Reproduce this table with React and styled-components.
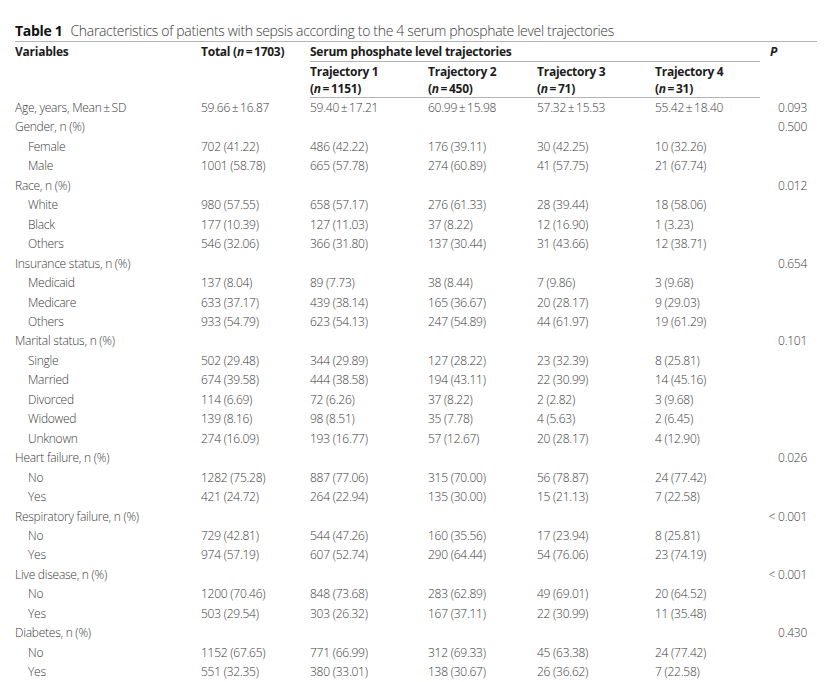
import styled, { createGlobalStyle } from "styled-components";

const GlobalStyle = createGlobalStyle`
  html, body {
    margin: 0;
    padding: 0;
    background: #ffffff;
  }
  body {
    font-family: "Open Sans", "Liberation Sans", sans-serif;
    color: #3a3a3a;
  }
`;

const Page = styled.div`
  padding: 22px 14px 0 15px;
  width: 802px;
`;

const Caption = styled.div`
  font-size: 14px;
  line-height: 18px;
  height: 19px;
  color: #3a3a3a;
  font-weight: 300;
  letter-spacing: -0.33px;
  white-space: nowrap;

  b {
    font-weight: 700;
    color: #111;
    letter-spacing: -0.3px;
    margin-right: 8px;
  }
`;

const Table = styled.table`
  width: 802px;
  border-collapse: collapse;
  table-layout: fixed;
  font-size: 12px;
  font-weight: 300;
  letter-spacing: -0.25px;
  border-top: 1px solid #b4b4b4;
`;

const Head = styled.thead`
  th {
    font-weight: 700;
    color: #1c1c1c;
    text-align: left;
    vertical-align: top;
    padding: 0;
    white-space: nowrap;
    letter-spacing: -0.25px;
  }
  tr:last-child th {
    border-bottom: 1px solid #b4b4b4;
  }
`;

const TopCell = styled.th`
  height: 19px;
  line-height: 19px;
  padding-left: ${(p) => p.$pad || 0}px !important;
`;

const GroupCell = styled.th`
  height: 19px;
  line-height: 19px;
  border-bottom: 1px solid #b4b4b4;
`;

const TrajCell = styled.th`
  height: 34px;
  line-height: 17px;
  padding-top: 1px !important;
`;

const PHead = styled.i`
  font-style: italic;
`;

const Row = styled.tr`
  td {
    height: 19.45px;
    line-height: 19.45px;
    padding: 0;
    white-space: nowrap;
    vertical-align: middle;
  }
`;

const Label = styled.td`
  padding-left: ${(p) => (p.$indent ? 13 : 0)}px !important;
`;

const PValue = styled.td`
  text-align: right;
  padding-right: 10px !important;
`;

const N = styled.i`
  font-style: italic;
`;

const pm = (a, b) => `${a}\u2009\u00b1\u2009${b}`;
const lt = "<\u00a00.001";

const rows = [
  ["Age, years, Mean\u2009\u00b1\u2009SD", false, [pm("59.66", "16.87"), pm("59.40", "17.21"), pm("60.99", "15.98"), pm("57.32", "15.53"), pm("55.42", "18.40")], "0.093"],
  ["Gender, n (%)", false, null, "0.500"],
  ["Female", true, ["702 (41.22)", "486 (42.22)", "176 (39.11)", "30 (42.25)", "10 (32.26)"]],
  ["Male", true, ["1001 (58.78)", "665 (57.78)", "274 (60.89)", "41 (57.75)", "21 (67.74)"]],
  ["Race, n (%)", false, null, "0.012"],
  ["White", true, ["980 (57.55)", "658 (57.17)", "276 (61.33)", "28 (39.44)", "18 (58.06)"]],
  ["Black", true, ["177 (10.39)", "127 (11.03)", "37 (8.22)", "12 (16.90)", "1 (3.23)"]],
  ["Others", true, ["546 (32.06)", "366 (31.80)", "137 (30.44)", "31 (43.66)", "12 (38.71)"]],
  ["Insurance status, n (%)", false, null, "0.654"],
  ["Medicaid", true, ["137 (8.04)", "89 (7.73)", "38 (8.44)", "7 (9.86)", "3 (9.68)"]],
  ["Medicare", true, ["633 (37.17)", "439 (38.14)", "165 (36.67)", "20 (28.17)", "9 (29.03)"]],
  ["Others", true, ["933 (54.79)", "623 (54.13)", "247 (54.89)", "44 (61.97)", "19 (61.29)"]],
  ["Marital status, n (%)", false, null, "0.101"],
  ["Single", true, ["502 (29.48)", "344 (29.89)", "127 (28.22)", "23 (32.39)", "8 (25.81)"]],
  ["Married", true, ["674 (39.58)", "444 (38.58)", "194 (43.11)", "22 (30.99)", "14 (45.16)"]],
  ["Divorced", true, ["114 (6.69)", "72 (6.26)", "37 (8.22)", "2 (2.82)", "3 (9.68)"]],
  ["Widowed", true, ["139 (8.16)", "98 (8.51)", "35 (7.78)", "4 (5.63)", "2 (6.45)"]],
  ["Unknown", true, ["274 (16.09)", "193 (16.77)", "57 (12.67)", "20 (28.17)", "4 (12.90)"]],
  ["Heart failure, n (%)", false, null, "0.026"],
  ["No", true, ["1282 (75.28)", "887 (77.06)", "315 (70.00)", "56 (78.87)", "24 (77.42)"]],
  ["Yes", true, ["421 (24.72)", "264 (22.94)", "135 (30.00)", "15 (21.13)", "7 (22.58)"]],
  ["Respiratory failure, n (%)", false, null, lt],
  ["No", true, ["729 (42.81)", "544 (47.26)", "160 (35.56)", "17 (23.94)", "8 (25.81)"]],
  ["Yes", true, ["974 (57.19)", "607 (52.74)", "290 (64.44)", "54 (76.06)", "23 (74.19)"]],
  ["Live disease, n (%)", false, null, lt],
  ["No", true, ["1200 (70.46)", "848 (73.68)", "283 (62.89)", "49 (69.01)", "20 (64.52)"]],
  ["Yes", true, ["503 (29.54)", "303 (26.32)", "167 (37.11)", "22 (30.99)", "11 (35.48)"]],
  ["Diabetes, n (%)", false, null, "0.430"],
  ["No", true, ["1152 (67.65)", "771 (66.99)", "312 (69.33)", "45 (63.38)", "24 (77.42)"]],
  ["Yes", true, ["551 (32.35)", "380 (33.01)", "138 (30.67)", "26 (36.62)", "7 (22.58)"]],
];

const trajectories = [
  ["Trajectory 1", "1151"],
  ["Trajectory 2", "450"],
  ["Trajectory 3", "71"],
  ["Trajectory 4", "31"],
];

export default function App() {
  return (
    <>
      <GlobalStyle />
      <Page>
        <Caption>
          <b>Table 1</b>Characteristics of patients with sepsis according to the 4 serum phosphate level trajectories
        </Caption>
        <Table>
          <colgroup>
            <col style={{ width: 186 }} />
            <col style={{ width: 109 }} />
            <col style={{ width: 118 }} />
            <col style={{ width: 109 }} />
            <col style={{ width: 118 }} />
            <col style={{ width: 105 }} />
            <col style={{ width: 57 }} />
          </colgroup>
          <Head>
            <tr>
              <TopCell rowSpan={2}>Variables</TopCell>
              <TopCell rowSpan={2}>
                Total (<N>n</N>{"\u2009=\u20091703)"}
              </TopCell>
              <GroupCell colSpan={4}>Serum phosphate level trajectories</GroupCell>
              <TopCell rowSpan={2} $pad={10}>
                <PHead>P</PHead>
              </TopCell>
            </tr>
            <tr>
              {trajectories.map(([name, n]) => (
                <TrajCell key={name}>
                  {name}
                  <br />(<N>n</N>
                  {"\u2009=\u2009" + n + ")"}
                </TrajCell>
              ))}
            </tr>
          </Head>
          <tbody>
            {rows.map(([label, indent, values, p], i) => (
              <Row key={i}>
                <Label $indent={indent}>{label}</Label>
                {(values || ["", "", "", "", ""]).map((v, j) => (
                  <td key={j}>{v}</td>
                ))}
                <PValue>{p || ""}</PValue>
              </Row>
            ))}
          </tbody>
        </Table>
      </Page>
    </>
  );
}
